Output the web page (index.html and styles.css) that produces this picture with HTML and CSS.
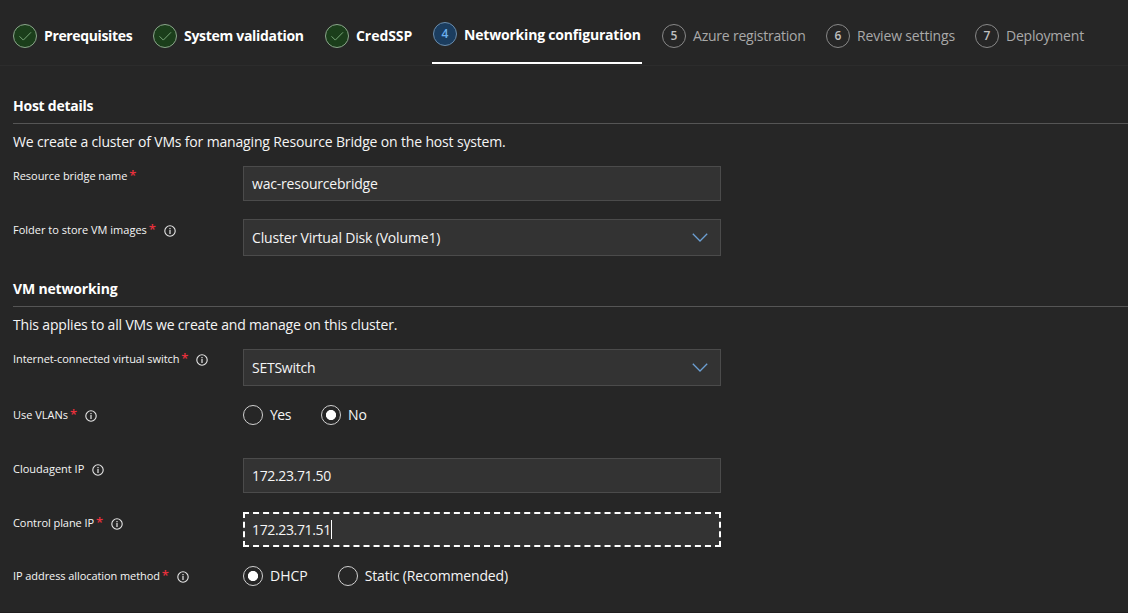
FILE: index.html
```html
<!DOCTYPE html>
<html lang="en">
<head>
<meta charset="utf-8">
<title>Networking configuration</title>
<link rel="stylesheet" href="styles.css">
</head>
<body>
<svg class="defs" width="0" height="0">
  <symbol id="info" viewBox="0 0 12 12"><circle cx="6" cy="6" r="5.2" fill="none" stroke="currentColor" stroke-width="1.1"/><path d="M6 3v1.2M6 5v4" stroke="currentColor" stroke-width="1.2"/></symbol>
  <symbol id="check" viewBox="0 0 24 24"><path d="M6.5 12.3l3.8 3.8 7.7-7.8" fill="none" stroke="currentColor" stroke-width="1"/></symbol>
  <symbol id="chevron" viewBox="0 0 16 9"><path d="M.8 .8L8 8l7.2-7.2" fill="none" stroke="currentColor" stroke-width="1.3"/></symbol>
</svg>
<nav class="steps">
  <div class="step done"><span class="badge"><svg><use href="#check"/></svg></span><span class="t s1">Prerequisites</span></div>
  <div class="step done"><span class="badge"><svg><use href="#check"/></svg></span><span class="t s2">System validation</span></div>
  <div class="step done"><span class="badge"><svg><use href="#check"/></svg></span><span class="t s3">CredSSP</span></div>
  <div class="step current"><span class="badge">4</span><span class="t s4">Networking configuration</span></div>
  <div class="step"><span class="badge">5</span><span class="t s5">Azure registration</span></div>
  <div class="step"><span class="badge">6</span><span class="t s6">Review settings</span></div>
  <div class="step"><span class="badge">7</span><span class="t s7">Deployment</span></div>
</nav>
<main class="content">
  <section class="group host">
    <h2 class="heading"><span class="t h1">Host details</span></h2>
    <p class="desc"><span class="t d1">We create a cluster of VMs for managing Resource Bridge on the host system.</span></p>
    <div class="row name-row"><div class="label"><span class="t l1">Resource bridge name</span><b class="req">*</b></div><div class="field"><span class="t v1">wac-resourcebridge</span></div></div>
    <div class="row folder-row"><div class="label low"><span class="t">Folder to store VM images</span><b class="req">*</b><svg class="info"><use href="#info"/></svg></div><div class="field select"><span class="t v2">Cluster Virtual Disk (Volume1)</span><svg class="chevron"><use href="#chevron"/></svg></div></div>
  </section>
  <section class="group network">
    <h2 class="heading"><span class="t h2">VM networking</span></h2>
    <p class="desc"><span class="t d2">This applies to all VMs we create and manage on this cluster.</span></p>
    <div class="row switch-row"><div class="label"><span class="t l3">Internet-connected virtual switch</span><b class="req">*</b><svg class="info"><use href="#info"/></svg></div><div class="field select"><span class="t v3">SETSwitch</span><svg class="chevron"><use href="#chevron"/></svg></div></div>
    <div class="row vlan-row"><div class="label"><span class="t">Use VLANs</span><b class="req">*</b><svg class="info"><use href="#info"/></svg></div><div class="radios"><span class="radio"><i class="dot"></i><span class="t r1">Yes</span></span><span class="radio"><i class="dot on"></i><span class="t">No</span></span></div></div>
    <div class="row agent-row"><div class="label low"><span class="t">Cloudagent IP</span><svg class="info"><use href="#info"/></svg></div><div class="field"><span class="t v4">172.23.71.50</span></div></div>
    <div class="row plane-row"><div class="label low"><span class="t l6">Control plane IP</span><b class="req">*</b><svg class="info"><use href="#info"/></svg></div><div class="field focused"><span class="t v4">172.23.71.51</span><i class="caret"></i></div></div>
    <div class="row method-row"><div class="label"><span class="t l7">IP address allocation method</span><b class="req">*</b><svg class="info"><use href="#info"/></svg></div><div class="radios"><span class="radio"><i class="dot on"></i><span class="t">DHCP</span></span><span class="radio"><i class="dot"></i><span class="t r4">Static (Recommended)</span></span></div></div>
  </section>
</main>
</body>
</html>
```
FILE: styles.css
```css
* { box-sizing: border-box; }
body { margin: 0; height: 613px; overflow: hidden; border-bottom: 1px solid #1f1d1e; background: #262626; color: #f5f5f5; font: 14px/20px "Open Sans", "Noto Sans", sans-serif; }
.defs { display: block; }
.t { white-space: nowrap; }

/* Wizard steps */
.steps { display: grid; grid-template-columns: 140px 172px 108px 229px 164px 149px auto; height: 66px; padding-left: 13px; border-bottom: 1px solid #2c2c2c; }
.step { display: flex; align-items: center; gap: 7px; height: 65px; padding-top: 6px; color: #a9a9a9; }
.badge { display: flex; flex: none; align-items: center; justify-content: center; width: 24px; height: 24px; border: 1px solid #888; border-radius: 50%; color: #c0c0c0; font-size: 12px; font-weight: 600; }
.done, .current { color: #fff; font-weight: 700; }
.done .badge { border-color: #8ba58b; background: #1b3e1b; color: #79a879; }
.badge svg { width: 24px; height: 24px; flex: none; }
.current { width: 210px; height: 64px; margin-left: -1px; padding: 5px 0 0 1px; border-bottom: 2px solid #fff; }
.current .badge { border-color: #6a8cab; background: #1b3d5f; color: #6cb0ee; }
.current .t { padding-top: 2px; }
.s1 { letter-spacing: -.36px; }
.s2 { letter-spacing: -.3px; }
.s3 { letter-spacing: -.05px; }
.s4 { letter-spacing: -.19px; }
.s5 { letter-spacing: -.22px; }
.s6 { letter-spacing: -.15px; }
.s7 { letter-spacing: -.2px; }

/* Form */
.content { padding-left: 13px; }
.host { padding-top: 30px; }
.network { padding-top: 7px; }
.heading { margin: 0; height: 28px; border-bottom: 1px solid #555; font-size: 14px; line-height: 20px; font-weight: 700; color: #fff; }
.desc { margin: 8px 0 0; height: 34px; }
.row { display: grid; grid-template-columns: 230px 478px; align-items: start; }
.label { display: flex; align-items: center; height: 20px; font-size: 11px; }
.low { height: 22px; }
.req { color: #e8303c; font-size: 13px; margin-left: 2px; padding-bottom: 2px; font-weight: 600; }
.info { width: 12px; height: 12px; margin: 1px 0 0 8px; color: #e6e6e6; }
.field { display: flex; align-items: center; height: 35px; padding-left: 8px; border: 1px solid #4b4b4b; background: #333; }
.select { height: 37px; justify-content: space-between; padding-right: 12px; }
.chevron { width: 16px; height: 9px; color: #6c9fd2; }
.focused { border: 2px dashed #fff; padding-left: 7px; }
.caret { width: 1px; height: 19px; background: #fff; }
.radios { display: flex; align-items: center; gap: 30px; }
.radio { display: flex; align-items: center; gap: 7px; }
.dot { width: 20px; height: 20px; border: 1px solid #d0d0d0; border-radius: 50%; }
.on { background: radial-gradient(circle, #fff 0 4.7px, transparent 5.4px); }
.name-row, .folder-row { height: 53px; }
.switch-row { height: 56px; }
.vlan-row { height: 53px; }
.agent-row, .plane-row { height: 54px; }
.h1 { letter-spacing: -.25px; }
.h2 { letter-spacing: -.16px; }
.d1 { letter-spacing: -.16px; }
.d2 { letter-spacing: -.17px; }
.l1 { letter-spacing: -.05px; }
.l3, .l7 { letter-spacing: -.08px; }
.l6 { letter-spacing: -.06px; }
.v1 { letter-spacing: -.2px; }
.v2 { letter-spacing: -.17px; }
.v3 { letter-spacing: -.25px; }
.v4 { letter-spacing: -.35px; }
.r1 { letter-spacing: -.5px; }
.r4 { letter-spacing: -.17px; }
```
